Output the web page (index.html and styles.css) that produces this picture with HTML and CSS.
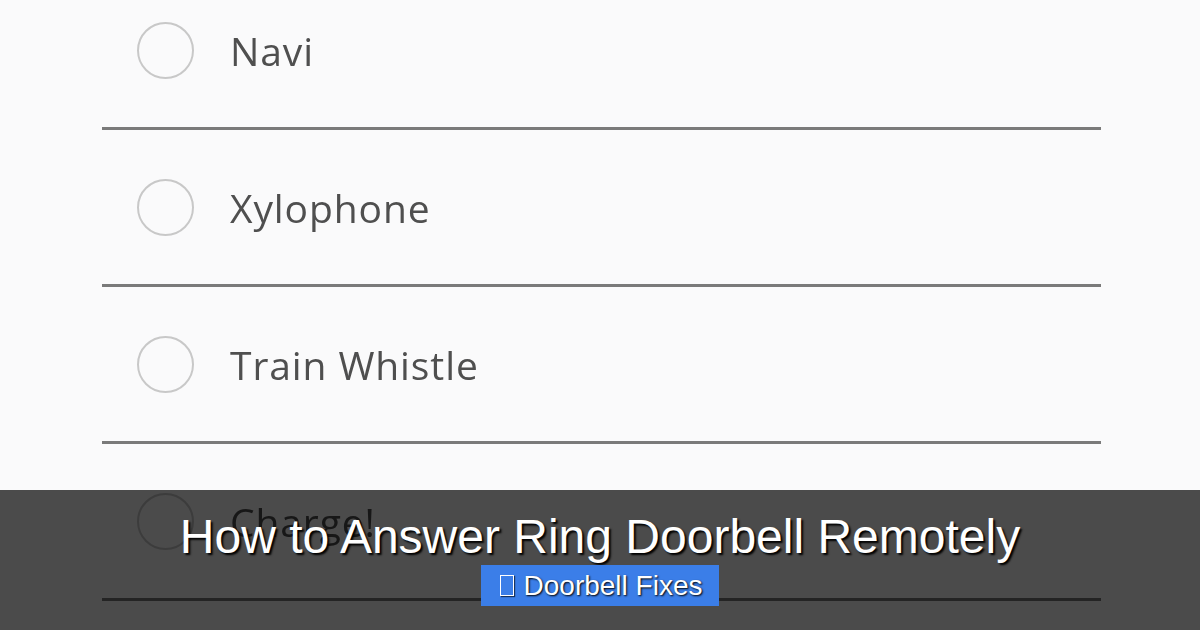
FILE: index.html
```html
<!DOCTYPE html>
<html lang="en">
<head>
<meta charset="utf-8">
<title>How to Answer Ring Doorbell Remotely</title>
<link rel="stylesheet" href="styles.css">
</head>
<body>
<div class="page">
  <ul class="tones">
    <li class="tone"><span class="radio"></span><span class="label">Navi</span></li>
    <li class="tone"><span class="radio"></span><span class="label">Xylophone</span></li>
    <li class="tone"><span class="radio"></span><span class="label">Train Whistle</span></li>
    <li class="tone"><span class="radio"></span><span class="label">Charge!</span></li>
  </ul>
  <div class="banner">
    <h1 class="title">How to Answer Ring Doorbell Remotely</h1>
    <span class="tag"><span class="tag-icon"></span>Doorbell Fixes</span>
  </div>
</div>
</body>
</html>
```
FILE: styles.css
```css
html, body {
  margin: 0;
  padding: 0;
}

body {
  width: 1200px;
  height: 630px;
  overflow: hidden;
  background: #fafafb;
}

.page {
  position: relative;
  width: 1200px;
  height: 630px;
  overflow: hidden;
}

/* ringtone list */
.tones {
  list-style: none;
  margin: -27px 0 0 102px;
  padding: 0;
  width: 999px;
  filter: blur(0.7px);
}

.tone {
  display: flex;
  align-items: center;
  gap: 36px;
  height: 154px;
  padding-left: 35px;
  border-bottom: 3px solid #7a7a7a;
}

.radio {
  width: 53px;
  height: 53px;
  border: 2px solid #c8c8c8;
  border-radius: 50%;
  flex: none;
}

.label {
  font-family: "Open Sans", "DejaVu Sans", sans-serif;
  font-size: 39px;
  font-weight: 500;
  color: #4f4f4f;
  letter-spacing: 0.9px;
}

/* caption banner */
.banner {
  position: absolute;
  left: 0;
  right: 0;
  bottom: 0;
  height: 140px;
  background: rgba(0, 0, 0, 0.7);
  display: flex;
  flex-direction: column;
  align-items: center;
}

.title {
  margin: 19px 0 0;
  font-family: "Liberation Sans", Arial, sans-serif;
  font-weight: normal;
  font-size: 48px;
  line-height: 56px;
  color: #fff;
  text-shadow: 2px 2px 2px #000;
}

.tag {
  margin-top: 0;
  display: flex;
  align-items: center;
  gap: 10px;
  height: 41px;
  padding: 0 17px 0 19px;
  background: #3b7ee8;
  font-family: "Liberation Sans", Arial, sans-serif;
  font-size: 28px;
  color: #fff;
  text-shadow: 1px 1px 2px #000;
}

.tag-icon {
  width: 12px;
  height: 19px;
  border: 1.5px solid #fff;
  box-shadow: 1px 1px 1px rgba(0, 0, 0, 0.6);
}
```
